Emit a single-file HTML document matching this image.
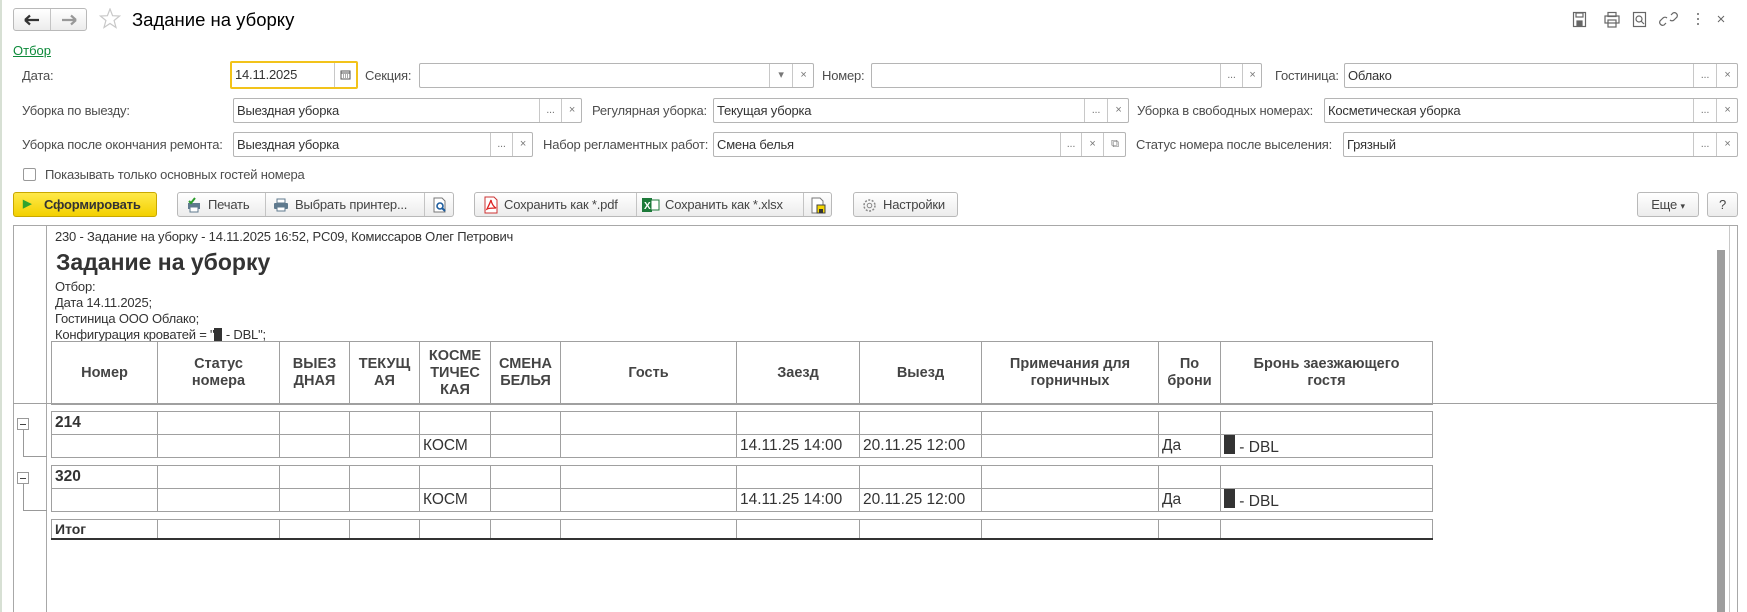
<!DOCTYPE html>
<html style="overflow:hidden;height:612px"><head><meta charset="utf-8">
<style>
*{box-sizing:border-box;margin:0;padding:0}
body{width:1747px;height:612px;overflow:hidden;background:#fff;font-family:"Liberation Sans",Arial,sans-serif;color:#4d4d4d;position:relative}
.a{position:absolute}
.lbl{position:absolute;font-size:13px;color:#4d4d4d;white-space:nowrap;letter-spacing:-0.2px}
.fld{position:absolute;border:1px solid #b5b5b5;border-radius:2px;background:#fff;font-size:13px;color:#333;padding-left:3px;line-height:23px;white-space:nowrap;letter-spacing:-0.2px}
.fb{position:absolute;top:0;bottom:0;border-left:1px solid #c8c8c8;text-align:center;font-size:11px;color:#777;line-height:23px}
.btn{position:absolute;height:25px;border:1px solid #b9b9b9;border-radius:3px;background:linear-gradient(#fff,#ececec);font-size:13px;color:#444;line-height:23px;white-space:nowrap;letter-spacing:-0.2px}
.btn .s{position:absolute;top:0;bottom:0;border-left:1px solid #c4c4c4}
table{border-collapse:collapse;position:absolute;table-layout:fixed}
td{border:1px solid #a0a0a0;font-size:15.5px;color:#333;padding:0 3px;white-space:nowrap;overflow:hidden}
.hd td{font-weight:bold;font-size:14.5px;color:#444;text-align:center;white-space:normal;line-height:17px}
.blk{display:inline-block;width:11px;height:19px;background:#333;vertical-align:-2px}
</style></head><body>
<div class="a" style="left:0;top:0;width:2px;height:612px;background:#d7e0d4"></div>
<div class="btn" style="left:13px;top:8px;width:74px;height:23px;border-radius:3px"><div class="s" style="left:36px"></div>
<svg class="a" style="left:10px;top:5px" width="16" height="12"><path d="M1 6H15M1 6L6 1.5M1 6L6 10.5" stroke="#333" stroke-width="2.2" fill="none"/></svg>
<svg class="a" style="left:47px;top:5px" width="16" height="12"><path d="M15 6H1M15 6L10 1.5M15 6L10 10.5" stroke="#999" stroke-width="2.2" fill="none"/></svg></div>
<svg class="a" style="left:99px;top:8px" width="22" height="21"><path d="M11 1L13.6 7.7 20.6 8 15.1 12.5 17 19.5 11 15.5 5 19.5 6.9 12.5 1.4 8 8.4 7.7Z" fill="none" stroke="#c8c8c8" stroke-width="1.2"/></svg>
<div class="a" style="left:132px;top:9px;font-size:18.5px;color:#000">Задание на уборку</div>
<svg class="a" style="left:1572px;top:11px" width="160" height="18" fill="none" stroke="#666" stroke-width="1.2">
<rect x="1.5" y="1.5" width="12" height="14"/><rect x="4" y="2" width="7" height="4"/><rect x="5" y="10" width="5" height="5" fill="#666"/>
<rect x="33" y="5" width="14" height="7"/><rect x="36" y="1.5" width="8" height="4"/><rect x="36" y="9" width="8" height="7"/>
<rect x="61.5" y="1.5" width="12" height="14"/><circle cx="67" cy="8" r="3"/><path d="M69 10L72 13"/>
<path d="M94 12l-2 2a3 3 0 01-4-4l3-3a3 3 0 014 0M99 4l2-2a3 3 0 014 4l-3 3a3 3 0 01-4 0"/>
<circle cx="126" cy="3" r="1" fill="#666" stroke="none"/><circle cx="126" cy="8" r="1" fill="#666" stroke="none"/><circle cx="126" cy="13" r="1" fill="#666" stroke="none"/>
<path d="M146 5l6 6M152 5l-6 6" stroke-width="1"/></svg>
<div class="a" style="left:13px;top:43px;font-size:13px;color:#0d8a3a;text-decoration:underline">Отбор</div>
<div class="lbl" style="left:22px;top:68px">Дата:</div>
<div class="fld" style="left:230px;top:61px;width:128px;height:28px;border:2px solid #f2c31a;line-height:24px">14.11.2025<div class="fb" style="left:102px;width:22px;line-height:22px"><svg width="11" height="11" style="margin-top:6px"><rect x="1" y="2" width="9" height="8" fill="none" stroke="#555"/><path d="M1 4H10M3 6h1M5 6h1M7 6h1M3 8h1M5 8h1M7 8h1" stroke="#555"/></svg></div></div>
<div class="lbl" style="left:365px;top:68px">Секция:</div>
<div class="fld" style="left:419px;top:63px;width:395px;height:25px"><div class="fb" style="left:349px;width:23px">▾</div><div class="fb" style="left:372px;width:22px">×</div></div>
<div class="lbl" style="left:822px;top:68px">Номер:</div>
<div class="fld" style="left:871px;top:63px;width:391px;height:25px"><div class="fb" style="left:348px;width:22px">...</div><div class="fb" style="left:370px;width:20px">×</div></div>
<div class="lbl" style="left:1275px;top:68px">Гостиница:</div>
<div class="fld" style="left:1344px;top:63px;width:394px;height:25px">Облако<div class="fb" style="left:348px;width:23px">...</div><div class="fb" style="left:371px;width:22px">×</div></div>
<div class="lbl" style="left:22px;top:103px">Уборка по выезду:</div>
<div class="fld" style="left:233px;top:98px;width:349px;height:25px">Выездная уборка<div class="fb" style="left:305px;width:22px">...</div><div class="fb" style="left:327px;width:21px">×</div></div>
<div class="lbl" style="left:592px;top:103px">Регулярная уборка:</div>
<div class="fld" style="left:713px;top:98px;width:416px;height:25px">Текущая уборка<div class="fb" style="left:370px;width:23px">...</div><div class="fb" style="left:393px;width:22px">×</div></div>
<div class="lbl" style="left:1137px;top:103px">Уборка в свободных номерах:</div>
<div class="fld" style="left:1324px;top:98px;width:414px;height:25px">Косметическая уборка<div class="fb" style="left:368px;width:23px">...</div><div class="fb" style="left:391px;width:22px">×</div></div>
<div class="lbl" style="left:22px;top:137px">Уборка после окончания ремонта:</div>
<div class="fld" style="left:233px;top:132px;width:300px;height:25px">Выездная уборка<div class="fb" style="left:256px;width:22px">...</div><div class="fb" style="left:278px;width:21px">×</div></div>
<div class="lbl" style="left:543px;top:137px">Набор регламентных работ:</div>
<div class="fld" style="left:713px;top:132px;width:413px;height:25px">Смена белья<div class="fb" style="left:346px;width:21px">...</div><div class="fb" style="left:367px;width:22px">×</div><div class="fb" style="left:389px;width:23px">⧉</div></div>
<div class="lbl" style="left:1136px;top:137px">Статус номера после выселения:</div>
<div class="fld" style="left:1343px;top:132px;width:395px;height:25px">Грязный<div class="fb" style="left:349px;width:23px">...</div><div class="fb" style="left:372px;width:22px">×</div></div>
<div class="a" style="left:23px;top:168px;width:13px;height:13px;border:1px solid #999;border-radius:2px"></div>
<div class="lbl" style="left:45px;top:167px">Показывать только основных гостей номера</div>
<div class="btn" style="left:13px;top:192px;width:144px;background:linear-gradient(#ffe94a,#f3d000);border-color:#c9a800;font-weight:bold;color:#333;padding-left:30px"><span class="a" style="left:9px;top:0;color:#2fa32f;font-size:11px">▶</span>Сформировать</div>
<div class="btn" style="left:177px;top:192px;width:277px">
<svg class="a" style="left:8px;top:4px" width="16" height="16"><rect x="2" y="6" width="12" height="6" fill="#5f7a8e"/><rect x="4" y="10" width="8" height="5" fill="#fff" stroke="#5f7a8e"/><path d="M3 4l2 2 4-5" stroke="#2a9d2a" stroke-width="2" fill="none"/></svg>
<span class="a" style="left:30px">Печать</span><div class="s" style="left:87px"></div>
<svg class="a" style="left:95px;top:5px" width="16" height="14"><rect x="4" y="1" width="8" height="4" fill="#fff" stroke="#5f7a8e"/><rect x="1" y="5" width="14" height="6" rx="1" fill="#5f7a8e"/><rect x="4" y="9" width="8" height="4" fill="#fff" stroke="#5f7a8e"/></svg>
<span class="a" style="left:117px">Выбрать принтер...</span><div class="s" style="left:246px"></div>
<svg class="a" style="left:254px;top:4px" width="16" height="16"><path d="M2 1h8l3 3v11H2z" fill="#fff" stroke="#777"/><circle cx="8" cy="9" r="3" fill="none" stroke="#1e5d9e" stroke-width="1.6"/><path d="M10 11l3 3" stroke="#1e5d9e" stroke-width="2"/></svg></div>
<div class="btn" style="left:474px;top:192px;width:358px">
<svg class="a" style="left:8px;top:3px" width="16" height="18"><path d="M2 1h9l3 3v13H2z" fill="#fff" stroke="#c33"/><path d="M4 13c3-6 4-9 4-9s1 6 5 8c-4 0-7 0-9 1z" fill="none" stroke="#d22" stroke-width="1.3"/></svg>
<span class="a" style="left:29px">Сохранить как *.pdf</span><div class="s" style="left:161px"></div>
<svg class="a" style="left:167px;top:4px" width="18" height="16"><rect x="0" y="1" width="10" height="14" fill="#1d7a3a"/><rect x="9" y="3" width="8" height="10" fill="#fff" stroke="#1d7a3a"/><text x="2" y="12" font-size="10" font-weight="bold" fill="#fff" font-family="Liberation Sans">X</text></svg>
<span class="a" style="left:190px">Сохранить как *.xlsx</span><div class="s" style="left:328px"></div>
<svg class="a" style="left:336px;top:4px" width="16" height="17"><path d="M1 1h8l3 3v12H1z" fill="#fff" stroke="#777"/><rect x="6" y="8" width="8" height="8" fill="#f4d600" stroke="#444"/><rect x="8" y="12" width="4" height="4" fill="#333"/></svg></div>
<div class="btn" style="left:853px;top:192px;width:105px">
<svg class="a" style="left:8px;top:5px" width="15" height="15"><circle cx="7.5" cy="7.5" r="5.5" fill="none" stroke="#888" stroke-width="1.5" stroke-dasharray="2 1.5"/><circle cx="7.5" cy="7.5" r="2.3" fill="none" stroke="#888"/></svg>
<span class="a" style="left:29px">Настройки</span></div>
<div class="btn" style="left:1637px;top:192px;width:62px;text-align:center">Еще <span style="font-size:9px">▾</span></div>
<div class="btn" style="left:1707px;top:192px;width:31px;text-align:center">?</div>
<div class="a" style="left:13px;top:225px;width:1725px;height:400px;border:1px solid #a8a8a8;border-bottom:none"></div>
<div class="a" style="left:46px;top:226px;width:1px;height:390px;background:#a8a8a8"></div>
<div class="a" style="left:1717px;top:250px;width:8px;height:380px;background:#9e9e9e"></div>
<div class="a" style="left:1729px;top:226px;width:1px;height:390px;background:#c8c8c8"></div>
<div class="a" style="left:55px;top:229px;font-size:13px;color:#333;letter-spacing:-0.2px">230 - Задание на уборку - 14.11.2025 16:52, PC09, Комиссаров Олег Петрович</div>
<div class="a" style="left:56px;top:249px;font-size:23px;font-weight:bold;color:#333">Задание на уборку</div>
<div class="a" style="left:55px;top:279px;font-size:13px;color:#333;line-height:16px;letter-spacing:-0.2px">Отбор:<br>Дата 14.11.2025;<br>Гостиница ООО Облако;<br>Конфигурация кроватей = "<span style="display:inline-block;width:8px;height:13px;background:#333;vertical-align:-2px"></span> - DBL";</div>
<div class="a" style="left:13px;top:403px;width:1704px;height:1px;background:#a0a0a0"></div>
<table style="left:51px;top:341px;width:1381px"><colgroup><col style="width:106px"><col style="width:122px"><col style="width:70px"><col style="width:70px"><col style="width:71px"><col style="width:70px"><col style="width:176px"><col style="width:123px"><col style="width:122px"><col style="width:177px"><col style="width:62px"><col style="width:212px"></colgroup>
<tr class="hd" style="height:63px"><td>Номер</td><td>Статус<br>номера</td><td>ВЫЕЗ ДНАЯ</td><td>ТЕКУЩ АЯ</td><td>КОСМЕ ТИЧЕС КАЯ</td><td>СМЕНА БЕЛЬЯ</td><td>Гость</td><td>Заезд</td><td>Выезд</td><td>Примечания для горничных</td><td>По брони</td><td>Бронь заезжающего<br>гостя</td></tr></table>
<table style="left:51px;top:411px;width:1381px"><colgroup><col style="width:106px"><col style="width:122px"><col style="width:70px"><col style="width:70px"><col style="width:71px"><col style="width:70px"><col style="width:176px"><col style="width:123px"><col style="width:122px"><col style="width:177px"><col style="width:62px"><col style="width:212px"></colgroup>
<tr style="height:23px"><td style="font-weight:bold">214</td><td></td><td></td><td></td><td></td><td></td><td></td><td></td><td></td><td></td><td></td><td></td></tr>
<tr style="height:23px"><td></td><td></td><td></td><td></td><td>КОСМ</td><td></td><td></td><td>14.11.25 14:00</td><td>20.11.25 12:00</td><td></td><td>Да</td><td><span class="blk"></span> - DBL</td></tr></table>
<table style="left:51px;top:465px;width:1381px"><colgroup><col style="width:106px"><col style="width:122px"><col style="width:70px"><col style="width:70px"><col style="width:71px"><col style="width:70px"><col style="width:176px"><col style="width:123px"><col style="width:122px"><col style="width:177px"><col style="width:62px"><col style="width:212px"></colgroup>
<tr style="height:23px"><td style="font-weight:bold">320</td><td></td><td></td><td></td><td></td><td></td><td></td><td></td><td></td><td></td><td></td><td></td></tr>
<tr style="height:23px"><td></td><td></td><td></td><td></td><td>КОСМ</td><td></td><td></td><td>14.11.25 14:00</td><td>20.11.25 12:00</td><td></td><td>Да</td><td><span class="blk"></span> - DBL</td></tr></table>
<table style="left:51px;top:519px;width:1381px"><colgroup><col style="width:106px"><col style="width:122px"><col style="width:70px"><col style="width:70px"><col style="width:71px"><col style="width:70px"><col style="width:176px"><col style="width:123px"><col style="width:122px"><col style="width:177px"><col style="width:62px"><col style="width:212px"></colgroup>
<tr style="height:19px"><td style="font-weight:bold;font-size:14px;border-bottom:2px solid #333">Итог</td><td style="border-bottom:2px solid #333"></td><td style="border-bottom:2px solid #333"></td><td style="border-bottom:2px solid #333"></td><td style="border-bottom:2px solid #333"></td><td style="border-bottom:2px solid #333"></td><td style="border-bottom:2px solid #333"></td><td style="border-bottom:2px solid #333"></td><td style="border-bottom:2px solid #333"></td><td style="border-bottom:2px solid #333"></td><td style="border-bottom:2px solid #333"></td><td style="border-bottom:2px solid #333"></td></tr></table>
<div class="a" style="left:17px;top:418px;width:12px;height:12px;border:1px solid #999;background:#fff"><div class="a" style="left:2px;top:5px;width:6px;height:1px;background:#444"></div></div>
<div class="a" style="left:23px;top:430px;width:24px;height:27px;border-left:1px solid #999;border-bottom:1px solid #999"></div>
<div class="a" style="left:17px;top:472px;width:12px;height:12px;border:1px solid #999;background:#fff"><div class="a" style="left:2px;top:5px;width:6px;height:1px;background:#444"></div></div>
<div class="a" style="left:23px;top:484px;width:24px;height:27px;border-left:1px solid #999;border-bottom:1px solid #999"></div>
</body></html>
